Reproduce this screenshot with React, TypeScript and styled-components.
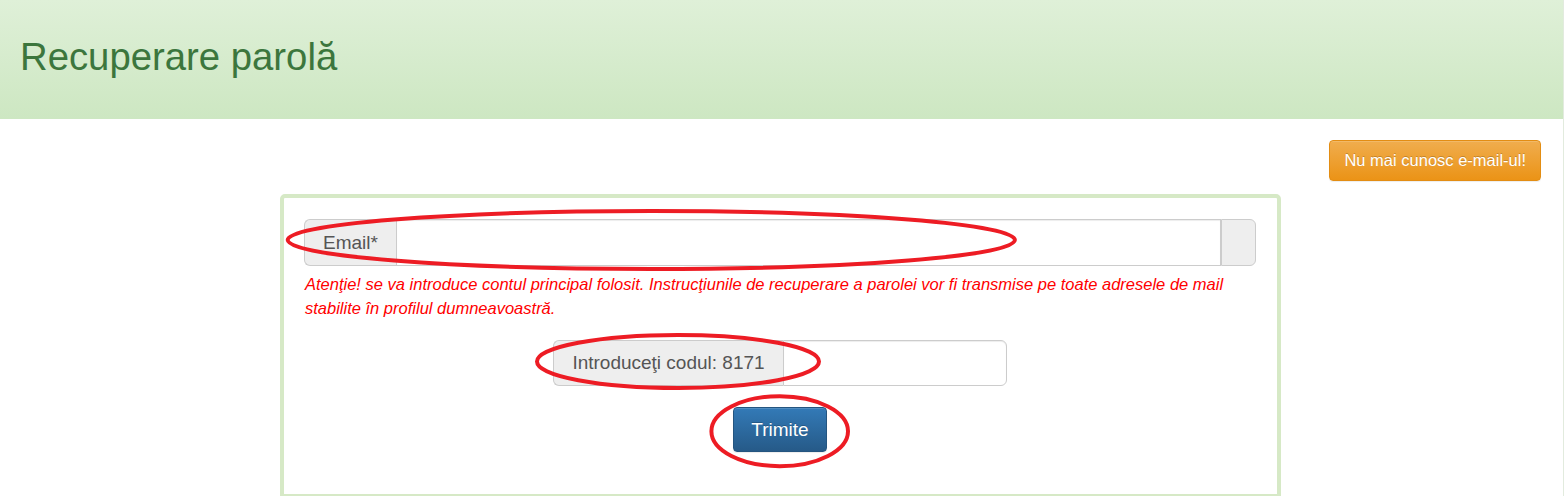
import React from "react";
import styled, { createGlobalStyle } from "styled-components";

const GlobalStyle = createGlobalStyle`
  html, body {
    margin: 0;
    padding: 0;
    background: #ffffff;
    font-family: "Liberation Sans", Arial, sans-serif;
  }
  * { box-sizing: border-box; }
`;

const Page = styled.div`
  position: relative;
  width: 1564px;
  min-height: 496px;
  border-right: 1px solid #e2ebde;
  overflow: hidden;
`;

const Header = styled.header`
  height: 119px;
  padding: 38px 0 0 20px;
  background: linear-gradient(to bottom, #dff0d8 0%, #cde7c2 100%);
`;

const Title = styled.h1`
  margin: 0;
  font-size: 38.3px;
  line-height: 38px;
  font-weight: normal;
  color: #3c763d;
`;

const Toolbar = styled.div`
  display: flex;
  justify-content: flex-end;
  padding: 21px 22px 0 0;
`;

const Button = styled.button<{ $variant: "warning" | "primary" }>`
  display: inline-flex;
  align-items: center;
  justify-content: center;
  margin: 0;
  border-radius: 4px;
  color: #ffffff;
  font-family: "Liberation Sans", Arial, sans-serif;
  font-weight: normal;
  cursor: pointer;
  text-shadow: 0 -1px 0 rgba(0, 0, 0, 0.2);
  box-shadow: inset 0 1px 0 rgba(255, 255, 255, 0.15), 0 1px 1px rgba(0, 0, 0, 0.075);
  ${({ $variant }) =>
    $variant === "warning"
      ? `
    height: 41px;
    padding: 0 14px;
    font-size: 16.5px;
    background: linear-gradient(to bottom, #f0ad4e 0%, #eb9316 100%);
    border: 1px solid #e38d13;
  `
      : `
    height: 45px;
    padding: 0 17px;
    font-size: 19px;
    margin-top: 21px;
    background: linear-gradient(to bottom, #337ab7 0%, #265a88 100%);
    border: 1px solid #245580;
  `}
`;

const Panel = styled.section`
  margin: 13px 0 0 280px;
  width: 1001px;
  border: 4px solid #d6e9c6;
  border-radius: 5px 5px 0 0;
  padding: 21px 21px 42px 20px;
  display: flex;
  flex-direction: column;
  align-items: center;
`;

const InputGroup = styled.div<{ $width: number; $height: number; $gap?: number }>`
  display: flex;
  width: ${({ $width }) => $width}px;
  height: ${({ $height }) => $height}px;
  margin-top: ${({ $gap }) => $gap ?? 0}px;
`;

const Addon = styled.span<{ $side: "left" | "right"; $width?: number }>`
  display: flex;
  align-items: center;
  justify-content: center;
  flex: none;
  width: ${({ $width }) => ($width ? `${$width}px` : "auto")};
  padding: ${({ $side }) => ($side === "left" ? "0 18px" : "0")};
  background: #eeeeee;
  border: 1px solid #cccccc;
  color: #555555;
  font-size: 19px;
  white-space: nowrap;
  border-radius: ${({ $side }) => ($side === "left" ? "6px 0 0 6px" : "0 6px 6px 0")};
  ${({ $side }) => ($side === "left" ? "border-right: none;" : "")}
`;

const Field = styled.input<{ $last?: boolean }>`
  flex: 1;
  min-width: 0;
  height: 100%;
  margin: 0;
  padding: 0 16px;
  border: 1px solid #cccccc;
  background: #ffffff;
  font-family: "Liberation Sans", Arial, sans-serif;
  font-size: 19px;
  color: #555555;
  outline: none;
  box-shadow: inset 0 1px 1px rgba(0, 0, 0, 0.075);
  border-radius: ${({ $last }) => ($last ? "0 6px 6px 0" : "0")};
`;

const Hint = styled.p`
  align-self: stretch;
  margin: 7px 0 0 1px;
  color: #ff0000;
  font-style: italic;
  font-size: 16.5px;
  line-height: 23.5px;
`;

const Marks = styled.svg`
  position: absolute;
  top: 0;
  left: 0;
  pointer-events: none;
`;

const marks = [
  { cx: 651.3, cy: 240, rx: 363.6, ry: 29 },
  { cx: 678, cy: 361.5, rx: 141, ry: 26.5 },
  { cx: 779.7, cy: 431.2, rx: 68.3, ry: 35 },
];

export default function App() {
  return (
    <>
      <GlobalStyle />
      <Page>
        <Header>
          <Title>Recuperare parolă</Title>
        </Header>
        <Toolbar>
          <Button $variant="warning" type="button">Nu mai cunosc e-mail-ul!</Button>
        </Toolbar>
        <Panel>
          <InputGroup $width={952} $height={47}>
            <Addon $side="left">Email*</Addon>
            <Field type="text" />
            <Addon $side="right" $width={35} />
          </InputGroup>
          <Hint>
            Atenţie! se va introduce contul principal folosit. Instrucţiunile de recuperare a parolei vor fi
            transmise pe toate adresele de mail stabilite în profilul dumneavoastră.
          </Hint>
          <InputGroup $width={454} $height={46} $gap={20}>
            <Addon $side="left" $width={230}>Introduceţi codul: 8171</Addon>
            <Field type="text" $last />
          </InputGroup>
          <Button $variant="primary" type="submit">Trimite</Button>
        </Panel>
        <Marks width={1564} height={496} viewBox="0 0 1564 496">
          {marks.map((m, i) => (
            <ellipse
              key={i}
              cx={m.cx}
              cy={m.cy}
              rx={m.rx}
              ry={m.ry}
              fill="none"
              stroke="#ed1c24"
              strokeWidth={4}
            />
          ))}
        </Marks>
      </Page>
    </>
  );
}
